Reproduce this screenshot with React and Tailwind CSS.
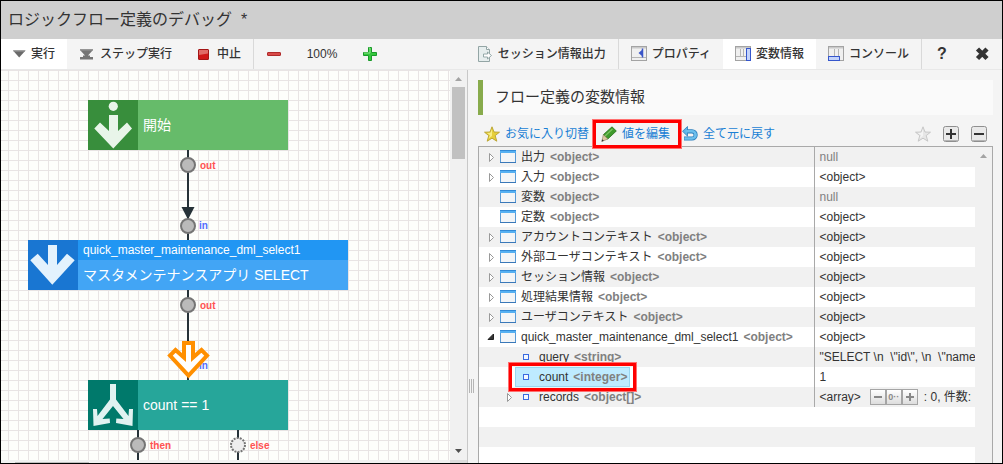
import React, { useState } from "react";

// Toolbar icons
const RunIcon = () => (
    <svg width="13" height="16" viewBox="0 0 13 16">
        <path d="M0 4.5h12.5L6.2 11.5z" fill="#6a6a6a" />
        <path d="M0 4.5h12.5l-1 1.2H1z" fill="#8d8d8d" />
    </svg>
);

const StepIcon = () => (
    <svg width="16" height="16" viewBox="0 0 16 16">
        <path d="M1 3h13v1L9 9.500h2V11H4V9.500h2L1 4z" fill="#757575" />
        <path d="M1 3h13v1.500H1z" fill="#969696" />
        <path d="M1 11h13v2.500H1z" fill="#757575" />
    </svg>
);

const StopIcon = () => (
    <svg width="16" height="16" viewBox="0 0 16 16">
        <rect x="2.5" y="3.5" width="10" height="10" rx="0.5" fill="#cf1717" stroke="#a31515" />
        <path d="M3 4h9v3.5L3 9z" fill="#e06a66" />
    </svg>
);

const MinusIcon = () => (
    <svg width="16" height="16" viewBox="0 0 16 16">
        <rect x="1.5" y="6.5" width="13" height="3" rx="0.5" fill="#d84a48" stroke="#b02a2a" />
    </svg>
);

const PlusIcon = () => (
    <svg width="16" height="16" viewBox="0 0 16 16">
        <path d="M6.5 1.5h3v5h5v3h-5v5h-3v-5h-5v-3h5z" fill="#35c63c" stroke="#1a9a2a" />
        <path d="M7 2h1v5H2" fill="none" stroke="#8be68a" />
    </svg>
);

const ExportIcon = () => (
    <svg width="16" height="16" viewBox="0 0 16 16">
        <path d="M1.500 0.5h8l3 3v12h-11z" fill="#e6eeee" stroke="#93a5a5" />
        <path d="M9.500 0.5v3h3" fill="#fff" stroke="#93a5a5" />
        <path d="M6.500 8h4V6l4 3.500-4 3.500v-2h-4z" fill="#fff" stroke="#8aa0a0" strokeWidth="0.9" />
    </svg>
);

const PanelIcon = ({ type }) => (
    <svg width="16" height="16" viewBox="0 0 16 16">
        <rect x="0.5" y="0.5" width="15" height="14" fill="#f0f0f0" stroke="#a3a3a3" />
        <path d="M1 1h14v1.500H1z" fill="#c9c9c9" />
        {type === "property" && (
            <>
                <path d="M1 11.5h14" stroke="#b5b5b5" />
                <path d="M11.500 2.500v9" stroke="#3a55c8" strokeWidth="1.5" />
                <path d="M7.500 7l3.500-3v6z" fill="#3a55c8" />
            </>
        )}
        {type === "variable" && (
            <>
                <path d="M1 10.5h10M5.500 3v7.500M8.500 3v7.500" stroke="#b5b5b5" />
                <rect x="11.500" y="2.500" width="4" height="12" fill="#c3d3fb" stroke="#3556cc" />
            </>
        )}
        {type === "console" && (
            <>
                <path d="M6.500 3v7.500M10.500 3v10" stroke="#b5b5b5" />
                <rect x="0.5" y="10.500" width="11" height="4" fill="#c3d3fb" stroke="#3556cc" />
            </>
        )}
    </svg>
);

const CloseIcon = () => (
    <svg width="16" height="16" viewBox="0 0 16 16">
        <path d="M3.500 3l9.500 9.500M13 3L3.500 12.500" stroke="#333" strokeWidth="4.500" />
    </svg>
);

// Icons for the variable list actions
const StarIcon = ({ off }) => (
    <svg width="16" height="16" viewBox="0 0 16 16">
        <path
            d="M8 0.800l2 5.200 5.500 0.200-4.300 3.400 1.600 5.600L8 12.200l-4.800 3 1.600-5.600L0.500 6.200 6 6z"
            fill={off ? "#e6e6e6" : "#e6cf3a"}
            stroke={off ? "#c3c3c3" : "#b8a12c"}
            strokeWidth="0.9"
        />
        <path d="M8 3v7L4.500 12.500 6 9.200 3 7l3.500-.2z" fill={off ? "#f4f4f4" : "#f8ee86"} />
    </svg>
);

const PencilIcon = () => (
    <svg width="16" height="16" viewBox="0 0 16 16">
        <path d="M11 0.800l4.300 4.200-8.500 8-4.500-4.300z" fill="#3f9a2c" stroke="#256e1b" strokeWidth="0.8" />
        <path d="M11.500 3l-7.500 7" stroke="#7cc463" strokeWidth="1.200" />
        <path d="M2.300 8.700l4.500 4.300-6 2.500z" fill="#dcc9a2" stroke="#8a7c5c" strokeWidth="0.600" />
        <path d="M1.300 13.200l1.600 1.600-2.300.8z" fill="#333" />
    </svg>
);

const UndoIcon = () => (
    <svg width="16" height="16" viewBox="0 0 16 16">
        <path d="M4.500 5.300H10a3.600 3.600 0 010 7.200H2" fill="none" stroke="#2b7fbd" strokeWidth="4.200" />
        <path d="M0.500 5.300l5-4.800v9.600z" fill="#5db3e6" stroke="#2b7fbd" strokeWidth="0.800" />
        <path d="M3.500 5.300H10a3.600 3.600 0 010 7.200H2.400" fill="none" stroke="#6cbfec" strokeWidth="2.600" />
    </svg>
);

const BoxIcon = ({ plus }) => (
    <svg width="16" height="16" viewBox="0 0 16 16">
        <rect x="0.5" y="0.5" width="15" height="15" rx="2" fill="#e9e9e9" stroke="#8f8f8f" />
        <path d="M1 14.500h14" stroke="#b5b5b5" />
        <path d="M3 8h10" stroke="#333" strokeWidth="2" />
        {plus && <path d="M8 3v10" stroke="#333" strokeWidth="2" />}
    </svg>
);

// Icons for the tree
const WindowIcon = () => (
    <svg width="16" height="16" viewBox="0 0 16 16">
        <rect x="0.5" y="1.500" width="15" height="12" fill="#f3f5f7" stroke="#5a9bd6" />
        <path d="M0 1h16v3H0z" fill="#55b0f2" />
        <path d="M0 1h16v1H0z" fill="#3189d6" />
        <path d="M0 13h16v1H0z" fill="#3a78b8" />
    </svg>
);

const FieldIcon = () => (
    <svg width="16" height="16" viewBox="0 0 16 16">
        <rect x="5.500" y="5.500" width="5" height="5" fill="#f4f8ff" stroke="#3a6be0" />
    </svg>
);

const TreeArrow = ({ open }) => (
    <svg width="12" height="12" viewBox="0 0 12 12">
        {open ? (
            <path d="M8.500 3v5.500H3z" fill="#333" stroke="#222" />
        ) : (
            <path d="M4.500 2.500l4 4-4 4z" fill="#fff" stroke="#999" />
        )}
    </svg>
);

const ScrollArrow = ({ down }) => (
    <svg width="17" height="17" viewBox="0 0 17 17">
        {down ? <path d="M5 6h7l-3.500 4z" fill="#505050" /> : <path d="M5 11h7L8.500 7z" fill="#a3a3a3" />}
    </svg>
);

const ToolButton = ({ icon, active, line, children }) => (
    <button
        className={`flex items-center gap-[5px] px-3 text-[12px] leading-none font-medium whitespace-nowrap ${
            active ? "bg-white" : ""
        } ${line ? "border-r border-[#d9d9d9]" : ""}`}
    >
        {icon}
        {children}
    </button>
);

const LinkButton = ({ icon, children }) => (
    <button className="flex items-center gap-[5px] whitespace-nowrap text-[#1a7fd4]">
        {icon}
        {children}
    </button>
);

const portLabels = [
    { text: "out", place: "left-[199px] top-[90px] text-[#ff5252]" },
    { text: "in", place: "left-[198px] top-[150px] text-[#536dfe]" },
    { text: "out", place: "left-[199px] top-[230px] text-[#ff5252]" },
    { text: "in", place: "left-[198px] top-[290px] text-[#536dfe]" },
    { text: "then", place: "left-[149px] top-[370px] text-[#ff5252]" },
    { text: "else", place: "left-[249px] top-[370px] text-[#ff5252]" },
];

const FlowCanvas = () => (
    <div className="relative flex-1 overflow-hidden bg-[#fdfefb] bg-[linear-gradient(to_right,#e8e4e4_1px,transparent_1px),linear-gradient(to_bottom,#e8e4e4_1px,transparent_1px)] bg-[size:10px_10px] bg-[position:7px_0px]">
        {/* Connectors */}
        <svg className="absolute left-0 top-0" width="449" height="400" viewBox="0 0 449 400">
            <g stroke="#263238" strokeWidth="2">
                <path d="M187 80v90M187 220v90M137 360v40M237 360v40" />
            </g>
            <path d="M180.500 137h13L187 149.500z" fill="#263238" />
            <g fill="#bababa" stroke="#757575" strokeWidth="2">
                <circle cx="187" cy="95" r="7" />
                <circle cx="187" cy="156" r="7" />
                <circle cx="187" cy="235" r="7" />
                <circle cx="137" cy="375" r="7" />
                <circle cx="237" cy="375" r="7" fill="#eeeeee" strokeDasharray="2 1.140" />
            </g>
        </svg>

        {portLabels.map((label, i) => (
            <span key={i} className={`absolute text-[10px] leading-[12px] font-bold ${label.place}`}>
                {label.text}
            </span>
        ))}

        {/* Start */}
        <div className="absolute left-[87px] top-[30px] flex h-[50px] w-[200px] bg-[#66bb6a] text-[14px] text-white">
            <svg className="bg-[#388e3c]" width="50" height="50" viewBox="0 0 50 50" fill="#e8f5e9">
                <circle cx="25.300" cy="6.300" r="4.600" />
                <path d="M21 15h9v16l9-8.500 5 6-18.700 20-19-20 5.700-6 9 8.500z" />
            </svg>
            <span className="self-center px-[5px]">開始</span>
        </div>

        {/* Select task */}
        <div className="absolute left-[27px] top-[170px] flex h-[50px] w-[320px] bg-[#42a5f5] text-white">
            <svg className="bg-[#1976d2]" width="50" height="50" viewBox="0 0 50 50" fill="#e3f2fd">
                <path d="M20 5h9v20l10-11.300 7.700 6.600-22.400 24.400-22-24.400 7.400-6.600L20 25z" />
            </svg>
            <div className="flex flex-1 flex-col">
                <span className="h-5 bg-[#2196f3] px-[5px] text-[12px] leading-5">
                    quick_master_maintenance_dml_select1
                </span>
                <span className="px-[5px] text-[14px] leading-[30px]">マスタメンテナンスアプリ SELECT</span>
            </div>
        </div>

        {/* Branch */}
        <div className="absolute left-[87px] top-[310px] flex h-[50px] w-[200px] bg-[#26a69a] text-[14px] text-white">
            <svg className="bg-[#00796b]" width="50" height="50" viewBox="0 0 50 50" fill="#e0f2f1">
                <path d="M22 4h6v15.500L40.500 36l.5-7h4l-.5 17L28 43l.3-4.500 7.200.500L25 26 14.500 39l7.200-.5.3 4.500-16.500 3L5 29h4l.5 7L22 19.500z" />
            </svg>
            <span className="self-center px-[5px]">count == 1</span>
        </div>

        {/* Current step */}
        <svg className="absolute left-[165px] top-[269px]" width="46" height="42" viewBox="0 0 46 42">
            <path
                d="M18 4h9v14.500L35.500 11l5.500 5.500-18.500 20L4 16.500 9.500 11l8.500 7.500z"
                fill="#fff"
                stroke="#ff8f00"
                strokeWidth="4"
            />
        </svg>
    </div>
);

const ArrayPager = () => (
    <span className="ml-[9px] mr-[6px] inline-flex h-4 align-middle text-[9px] leading-none font-bold text-[#8a8a8a]">
        <button className="flex h-4 w-4 items-center justify-center border border-[#a5a5a5] bg-linear-to-b from-white to-[#dddddd]">
            <svg width="10" height="10" viewBox="0 0 10 10">
                <path d="M1 5h8" stroke="#888" strokeWidth="2" />
            </svg>
        </button>
        <button className="flex h-4 w-4 items-center justify-center border border-[#a5a5a5] bg-linear-to-b from-white to-[#dddddd]">
            0··
        </button>
        <button className="flex h-4 w-4 items-center justify-center border border-[#a5a5a5] bg-linear-to-b from-white to-[#dddddd]">
            <svg width="10" height="10" viewBox="0 0 10 10">
                <path d="M1 5h8M5 1v8" stroke="#888" strokeWidth="2" />
            </svg>
        </button>
    </span>
);

const variables = [
    { name: "出力", type: "<object>", value: "null", arrow: true },
    { name: "入力", type: "<object>", value: "<object>", arrow: true },
    { name: "変数", type: "<object>", value: "null" },
    { name: "定数", type: "<object>", value: "<object>" },
    { name: "アカウントコンテキスト", type: "<object>", value: "<object>", arrow: true },
    { name: "外部ユーザコンテキスト", type: "<object>", value: "<object>", arrow: true },
    { name: "セッション情報", type: "<object>", value: "<object>", arrow: true },
    { name: "処理結果情報", type: "<object>", value: "<object>", arrow: true },
    { name: "ユーザコンテキスト", type: "<object>", value: "<object>", arrow: true },
    { name: "quick_master_maintenance_dml_select1", type: "<object>", value: "<object>", arrow: true, open: true },
    { name: "query", type: "<string>", value: '"SELECT \\n  \\"id\\", \\n  \\"name', child: true },
    { name: "count", type: "<integer>", value: "1", child: true },
    { name: "records", type: "<object[]>", value: "<array>", child: true, arrow: true, pager: true },
];

const VariableTable = () => {
    const [selected, setSelected] = useState("count");

    return (
        <div className="flex min-h-0 flex-1 border border-b-0 border-[#a9a9a9] bg-[#f1f1f1]">
            <div className="min-w-0 flex-1 overflow-hidden bg-[repeating-linear-gradient(to_bottom,#f1f1f1_0px,#f1f1f1_20px,#ffffff_20px,#ffffff_40px)]">
                <table className="w-full table-fixed border-collapse">
                    <tbody>
                        {variables.map((item) => (
                            <tr key={item.name} className="h-5" onClick={() => setSelected(item.name)}>
                                <td className="w-[335px] border-r border-[#a9a9a9] p-0">
                                    <div className={`flex h-5 items-center ${item.child ? "pl-6" : "pl-[6px]"}`}>
                                        <span className="w-3 shrink-0">
                                            {item.arrow && <TreeArrow open={item.open} />}
                                        </span>
                                        <span
                                            className={`relative flex h-5 items-center border px-[2px] whitespace-nowrap ${
                                                selected === item.name
                                                    ? "border-[#99d6f0] bg-[#beebff]"
                                                    : "border-transparent"
                                            }`}
                                        >
                                            {item.child ? <FieldIcon /> : <WindowIcon />}
                                            <span className="ml-[5px]">{item.name}</span>
                                            <span className="ml-[5px] font-bold text-[#808080]">{item.type}</span>
                                            {item.name === "count" && (
                                                <span className="pointer-events-none absolute -inset-x-[7px] -inset-y-[5px] border-3 border-[#ff0000] ring-1 ring-[#ff7070]" />
                                            )}
                                        </span>
                                    </div>
                                </td>
                                <td
                                    className={`p-0 pl-[5px] whitespace-pre ${
                                        item.value === "null" ? "text-[#808080]" : ""
                                    }`}
                                >
                                    <div className="flex h-5 items-center">
                                        {item.value}
                                        {item.pager && (
                                            <>
                                                <ArrayPager />
                                                <span>: 0, 件数:</span>
                                            </>
                                        )}
                                    </div>
                                </td>
                            </tr>
                        ))}
                    </tbody>
                </table>
            </div>
            <div className="w-[17px] shrink-0">
                <ScrollArrow />
            </div>
        </div>
    );
};

const App = () => {
    return (
        <div className="flex h-screen flex-col overflow-hidden border border-black bg-[#f4f4f4] font-['Liberation_Sans','Noto_Sans_CJK_JP',sans-serif] text-[12px] text-[#333]">
            {/* Header */}
            <header className="flex h-[38px] shrink-0 items-center bg-[#cfcfcf] px-[7px]">
                <h1 className="text-[16px] whitespace-pre">ロジックフロー定義のデバッグ{"  "}*</h1>
            </header>

            {/* Toolbar */}
            <div className="flex h-[31px] shrink-0 justify-between border-b border-[#e8e8e8] bg-[#f4f4f4]">
                <div className="flex">
                    <ToolButton icon={<RunIcon />} active>実行</ToolButton>
                    <ToolButton icon={<StepIcon />}>ステップ実行</ToolButton>
                    <ToolButton icon={<StopIcon />} line>中止</ToolButton>
                    <button aria-label="縮小" className="flex w-10 items-center justify-center">
                        <MinusIcon />
                    </button>
                    <span className="w-14 self-center text-center font-medium">100%</span>
                    <button aria-label="拡大" className="flex w-10 items-center justify-center">
                        <PlusIcon />
                    </button>
                </div>
                <div className="flex">
                    <ToolButton icon={<ExportIcon />} line>セッション情報出力</ToolButton>
                    <ToolButton icon={<PanelIcon type="property" />}>プロパティ</ToolButton>
                    <ToolButton icon={<PanelIcon type="variable" />} active>変数情報</ToolButton>
                    <ToolButton icon={<PanelIcon type="console" />} line>コンソール</ToolButton>
                    <button className="w-10 text-[16px] font-bold">?</button>
                    <button aria-label="閉じる" className="flex w-10 items-center justify-center">
                        <CloseIcon />
                    </button>
                </div>
            </div>

            <div className="flex min-h-0 flex-1">
                {/* Flow */}
                <div className="flex w-[466px] shrink-0 flex-col">
                    <div className="flex min-h-0 flex-1">
                        <FlowCanvas />
                        <div className="flex w-[17px] flex-col items-center bg-[#f1f1f1]">
                            <ScrollArrow />
                            <div className="h-[72px] w-[13px] bg-[#c1c1c1]" />
                            <div className="mt-auto">
                                <ScrollArrow down />
                            </div>
                        </div>
                    </div>
                    <div className="flex h-[3px] items-end bg-[#f1f1f1] pl-[14px]">
                        <div className="h-px w-[74px] bg-[#c1c1c1]" />
                        <div className="ml-auto h-[3px] w-[17px] bg-[#dcdcdc]" />
                    </div>
                </div>

                {/* Splitter */}
                <div className="w-[11px] shrink-0 border-l border-[#c8c8c8] pt-[309px] pl-px">
                    <div className="flex h-[14px] gap-px">
                        <div className="w-px bg-[#b5b5b5]" />
                        <div className="w-px bg-[#b5b5b5]" />
                        <div className="w-px bg-[#b5b5b5]" />
                    </div>
                </div>

                {/* Variables */}
                <div className="flex min-w-0 flex-1 flex-col pt-[10px] pr-[9px]">
                    <h2 className="flex h-[35px] shrink-0 items-center border-l-[5px] border-[#88ab4c] bg-[#fafafa] pl-3 text-[15px]">
                        フロー定義の変数情報
                    </h2>
                    <div className="flex h-[31px] shrink-0 items-center gap-3 px-[6px] pt-[7px]">
                        <LinkButton icon={<StarIcon />}>お気に入り切替</LinkButton>
                        <div className="relative z-10">
                            <LinkButton icon={<PencilIcon />}>値を編集</LinkButton>
                            <span className="pointer-events-none absolute -inset-y-[5px] -left-2 -right-[11px] border-3 border-[#ff0000] ring-1 ring-[#ff7070]" />
                        </div>
                        <LinkButton icon={<UndoIcon />}>全て元に戻す</LinkButton>
                        <div className="ml-auto flex gap-3">
                            <button aria-label="お気に入り">
                                <StarIcon off />
                            </button>
                            <button aria-label="すべて展開">
                                <BoxIcon plus />
                            </button>
                            <button aria-label="すべて折りたたむ">
                                <BoxIcon />
                            </button>
                        </div>
                    </div>
                    <VariableTable />
                </div>
            </div>
        </div>
    );
};

export default App;
